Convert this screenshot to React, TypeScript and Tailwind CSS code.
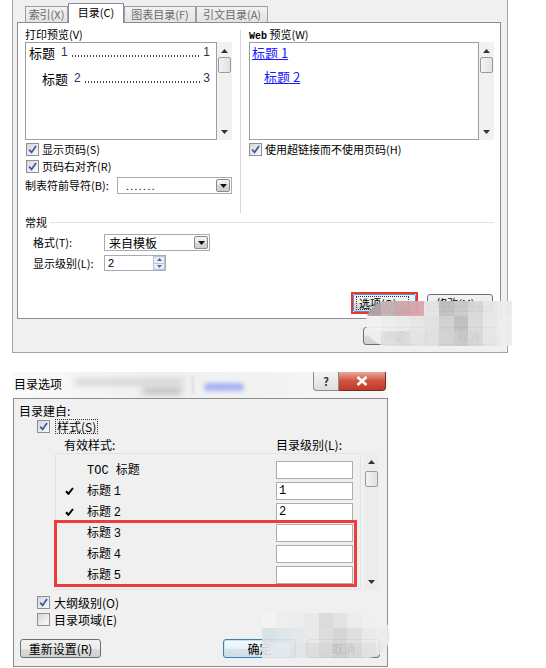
import React from "react";

const CJK = "font-['Noto_Sans_CJK_SC','Noto_Sans',sans-serif]";
const BTN =
  "flex items-center justify-center rounded-[3px] border border-[#707070] bg-[linear-gradient(#f2f2f2,#ebebeb_50%,#dddddd_50%,#cfcfcf)] text-black";

function CheckBox({ checked }: { checked?: boolean }) {
  return (
    <span className="flex h-[13px] w-[13px] shrink-0 items-center justify-center border border-[#8f8f8f] bg-[linear-gradient(135deg,#d6d6d6,#fbfbfb)]">
      {checked && (
        <svg width="9" height="9" viewBox="0 0 9 9">
          <path d="M1.2 4.6 L3.6 7.4 L8 1" stroke="#3657a8" strokeWidth="1.7" fill="none" />
        </svg>
      )}
    </span>
  );
}

function DropBtn() {
  return (
    <span className="ml-auto mr-[1px] flex h-[13px] w-[14px] items-center justify-center rounded-[2px] border border-[#8a8a8a] bg-[linear-gradient(#f6f6f6,#e4e4e4_50%,#d6d6d6_50%,#cfcfcf)]">
      <svg width="7" height="4" viewBox="0 0 7 4">
        <path d="M0 0 L7 0 L3.5 4 Z" fill="#111" />
      </svg>
    </span>
  );
}

function ScrollBar({ w, h, thumbTop, light }: { w: number; h: number; thumbTop: number; light?: boolean }) {
  return (
    <div
      className={`relative flex shrink-0 flex-col items-center ${light ? "bg-[#ececec]" : "bg-[#f1f1f1]"}`}
      style={{ width: w, height: h }}
    >
      <svg className="mt-[7px]" width="7" height="4" viewBox="0 0 7 4">
        <path d="M0 4 L7 4 L3.5 0 Z" fill="#333" />
      </svg>
      <div
        className="absolute left-[1px] right-[1px] h-[16px] rounded-[2px] border border-[#9b9b9b] bg-[linear-gradient(90deg,#f3f3f3,#e2e2e2)]"
        style={{ top: thumbTop }}
      />
      <svg className="mb-[6px] mt-auto" width="7" height="4" viewBox="0 0 7 4">
        <path d="M0 0 L7 0 L3.5 4 Z" fill="#333" />
      </svg>
    </div>
  );
}

function TocLine({ indent, n, page, mt }: { indent: number; n: string; page: string; mt: number }) {
  return (
    <div className="flex h-[18px] min-w-0 items-center whitespace-nowrap" style={{ paddingLeft: indent, marginTop: mt }}>
      <span className="shrink-0 text-[13px]">标题</span>
      <span className="ml-[6px] shrink-0 font-['Liberation_Sans',sans-serif] text-[12px] text-[#2a3350]">{n}</span>
      <span className="mx-[3px] mt-[8px] h-[2px] min-w-0 flex-1 bg-[radial-gradient(circle,#444_0.7px,transparent_0.9px)] bg-[length:3px_2px]" />
      <span className="shrink-0 font-['Liberation_Sans',sans-serif] text-[12px] text-[#2a3350]">{page}</span>
    </div>
  );
}

function Tab({ label, w }: { label: string; w: number }) {
  return (
    <div
      className="flex h-[16px] items-center justify-center border border-b-0 border-[#9a9da5] bg-[linear-gradient(#f2f2f2,#e3e3e3)] text-[11px] text-[#6a6a6a]"
      style={{ width: w }}
    >
      {label}
    </div>
  );
}

function TopDialog() {
  return (
    <div className="ml-[12px] flex h-[353px] w-[496px] flex-col border border-t-0 border-[#a3a3a3] bg-[#f0f0f0]">
      {/* tabs */}
      <div className="flex h-[22px] items-end pl-[12px] leading-none">
        <Tab label="索引(X)" w={43} />
        <div className="relative z-10 mb-[-1px] flex h-[20px] w-[56px] items-center justify-center border border-b-0 border-[#898c95] bg-white pb-[2px] text-[11px]">
          目录(C)
        </div>
        <Tab label="图表目录(F)" w={72} />
        <Tab label="引文目录(A)" w={72} />
      </div>
      {/* panel */}
      <div className="ml-[4px] flex h-[297px] w-[484px] flex-col border border-[#898c95] bg-white text-[11px]">
        <div className="flex items-start pl-[7px] pt-[5px]">
          {/* left column */}
          <div className="flex w-[207px] shrink-0 flex-col">
            <div className="h-[12px] leading-[12px]">打印预览(V)</div>
            <div className="mt-[2px] flex h-[98px] w-[207px]">
              <div className="flex min-w-0 flex-1 flex-col overflow-hidden border border-[#9a9ea6] pl-[3px] pr-[6px] leading-none">
                <TocLine indent={0} n="1" page="1" mt={0} />
                <TocLine indent={13} n="2" page="3" mt={8} />
              </div>
              <ScrollBar w={15} h={98} thumbTop={15} />
            </div>
            <div className="mt-[3px] flex h-[13px] items-center pl-[1px]">
              <CheckBox checked />
              <span className="ml-[3px] leading-none">显示页码(S)</span>
            </div>
            <div className="mt-[4px] flex h-[13px] items-center pl-[1px]">
              <CheckBox checked />
              <span className="ml-[3px] leading-none">页码右对齐(R)</span>
            </div>
            <div className="mt-[4px] flex h-[17px] items-center">
              <span className="w-[92px] leading-none">制表符前导符(B):</span>
              <div className="flex h-[17px] w-[115px] items-center border border-[#a5acb5] bg-white pl-[8px]">
                <span className="text-[10px] leading-none tracking-[1.5px]">.......</span>
                <DropBtn />
              </div>
            </div>
          </div>
          {/* separator */}
          <div className="ml-[8px] mt-[2px] h-[183px] w-px shrink-0 bg-[#d6d6d6]" />
          {/* right column */}
          <div className="ml-[8px] flex w-[245px] shrink-0 flex-col">
            <div className="h-[12px] leading-[12px]">
              <span className="font-['Liberation_Mono',monospace] text-[10px] font-bold">Web</span> 预览(W)
            </div>
            <div className="mt-[2px] flex h-[98px] w-[245px]">
              <div className="flex min-w-0 flex-1 flex-col overflow-hidden border border-[#9a9ea6] text-[13px] leading-none">
                <div className="flex h-[18px] items-center pl-[2px]">
                  <span className="text-[#1a1aff] underline">标题 1</span>
                </div>
                <div className="mt-[6px] flex h-[18px] items-center pl-[14px]">
                  <span className="text-[#1a1aff] underline">标题 2</span>
                </div>
              </div>
              <ScrollBar w={15} h={98} thumbTop={15} />
            </div>
            <div className="mt-[3px] flex h-[13px] items-center">
              <CheckBox checked />
              <span className="ml-[3px] leading-none">使用超链接而不使用页码(H)</span>
            </div>
          </div>
        </div>
        {/* general */}
        <div className="mt-[3px] flex h-[12px] items-center pl-[7px] pr-[6px]">
          <span className="leading-none">常规</span>
          <div className="ml-[3px] h-px flex-1 bg-[#dbe3ea]" />
        </div>
        <div className="mt-[6px] flex h-[17px] items-center pl-[15px]">
          <span className="w-[71px] leading-none">格式(T):</span>
          <div className="flex h-[17px] w-[106px] items-center border border-[#a5acb5] bg-white pl-[4px] text-[12px] leading-none">
            来自模板
            <DropBtn />
          </div>
        </div>
        <div className="mt-[4px] flex h-[16px] items-center pl-[15px]">
          <span className="w-[71px] leading-none">显示级别(L):</span>
          <div className="flex h-[16px] w-[62px] items-center border border-[#a5acb5] bg-white pl-[3px] text-[11px] leading-none">
            <span className="font-['Liberation_Sans',sans-serif]">2</span>
            <div className="ml-auto flex h-[14px] w-[12px] flex-col">
              <div className="flex flex-1 items-center justify-center border border-[#b7c4d6] bg-[#e6eef8]">
                <svg width="5" height="3" viewBox="0 0 5 3">
                  <path d="M0 3 L5 3 L2.5 0 Z" fill="#4e6a90" />
                </svg>
              </div>
              <div className="flex flex-1 items-center justify-center border border-t-0 border-[#b7c4d6] bg-[#e6eef8]">
                <svg width="5" height="3" viewBox="0 0 5 3">
                  <path d="M0 0 L5 0 L2.5 3 Z" fill="#4e6a90" />
                </svg>
              </div>
            </div>
          </div>
        </div>
        {/* options / modify */}
        <div className="mb-[4px] mt-auto flex items-center justify-end gap-[9px] pr-[7px]">
          <div className="flex h-[22px] w-[67px] border-2 border-[#ec3338]">
            <div className="flex flex-1 items-center justify-start rounded-[2px] border border-[#3c9fd8] bg-[linear-gradient(#f6f6f6,#ececec_50%,#dedede_50%,#d4d4d4)] pl-[2px]">
              <span className="border border-dotted border-[#333] px-[2px] text-[11px] leading-[12px]">选项(O)...</span>
            </div>
          </div>
          <div className={`${BTN} h-[18px] w-[66px] text-[11px] leading-none`}>修改(M)...</div>
        </div>
      </div>
      {/* ok / cancel */}
      <div className="mt-[8px] flex justify-end gap-[10px] pr-[7px]">
        <div className={`${BTN} h-[18px] w-[64px] text-[11px] leading-none`}>确定</div>
        <div className={`${BTN} h-[18px] w-[63px] text-[11px] leading-none`}>取消</div>
      </div>
    </div>
  );
}

const ROWS: { label: string; mark?: boolean; val?: string }[] = [
  { label: "TOC 标题" },
  { label: "标题 1", mark: true, val: "1" },
  { label: "标题 2", mark: true, val: "2" },
  { label: "标题 3" },
  { label: "标题 4" },
  { label: "标题 5" },
];

function BottomDialog() {
  return (
    <div className="ml-[12px] mt-[19px] flex w-[376px] flex-col">
      {/* title bar */}
      <div className="relative flex h-[26px] items-start overflow-hidden bg-[linear-gradient(90deg,#fafafa,#f0f0f0_40%,#f6f6f6)]">
        <div className="absolute left-[62px] top-[7px] h-[6px] w-[110px] rounded-full bg-[#d2d2d2] blur-[3px]" />
        <div className="absolute left-[130px] top-[16px] h-[6px] w-[40px] rounded-full bg-[#b9b9b9] blur-[3px]" />
        <div className="absolute left-[180px] top-[4px] h-[18px] w-[2px] bg-[#dcdcdc] blur-[1px]" />
        <div className="absolute left-[192px] top-[11px] h-[8px] w-[40px] rounded-full bg-[#a6b2f2] blur-[2px]" />
        <span className="relative ml-[2px] mt-[5px] text-[12px] leading-[13px]">目录选项</span>
        <div className="relative ml-auto mr-[2px] flex">
          <div className="flex h-[19px] w-[26px] items-center justify-center rounded-bl-[4px] border border-t-0 border-[#8c8c8c] bg-[linear-gradient(#f4f4f4,#dedede)] text-[11px] font-bold leading-none text-[#333]">
            ?
          </div>
          <div className="flex h-[19px] w-[47px] items-center justify-center rounded-br-[4px] border border-l-0 border-t-0 border-[#7a2a20] bg-[linear-gradient(#e9a99b,#d0533c_50%,#c0392b)]">
            <svg width="12" height="10" viewBox="0 0 12 10">
              <path d="M1.5 1 L10.5 9 M10.5 1 L1.5 9" stroke="#ffffff" strokeWidth="2.6" />
            </svg>
          </div>
        </div>
      </div>
      {/* body */}
      <div className="ml-[1px] flex h-[269px] w-[375px] flex-col border border-[#8d8d8d] bg-[#f0f0f0] text-[12px]">
        <div className="mt-[5px] h-[14px] pl-[5px] leading-[14px]">目录建自:</div>
        <div className="mt-[1px] flex h-[15px] items-center pl-[23px]">
          <CheckBox checked />
          <span className="ml-[5px] border border-dotted border-[#333] px-[1px] leading-[13px]">样式(S)</span>
        </div>
        <div className="mt-[4px] flex h-[14px] items-center pl-[50px] leading-none">
          <span className="w-[212px]">有效样式:</span>
          <span>目录级别(L):</span>
        </div>
        <div className="mt-[1px] flex h-[137px] pl-[41px]">
          <div className="flex w-[306px] flex-col rounded-[2px] border border-[#dfe4e9] bg-[#f0f0f0] pt-[7px]">
            {ROWS.map((r) => (
              <div key={r.label} className="mb-[3px] flex h-[18px] items-center">
                <span className="flex w-[31px] pl-[9px]">
                  {r.mark && (
                    <svg width="9" height="8" viewBox="0 0 9 8">
                      <path d="M1 4.2 L3.4 6.8 L8 1" stroke="#000" strokeWidth="2" fill="none" />
                    </svg>
                  )}
                </span>
                <span className="w-[189px] leading-none">
                  {r.label.split(" ").map((p, i) =>
                    /^[A-Z0-9]+$/.test(p) ? (
                      <span key={i} className="font-['Liberation_Mono',monospace] text-[12px]">
                        {p}
                        {i === 0 ? " " : ""}
                      </span>
                    ) : (
                      <span key={i}>
                        {p}
                        {i === 0 ? " " : ""}
                      </span>
                    )
                  )}
                </span>
                <div className="flex h-[18px] w-[77px] items-center border border-[#abadb3] bg-white pl-[2px] font-['Liberation_Mono',monospace] text-[12px] leading-none">
                  {r.val ?? ""}
                </div>
              </div>
            ))}
          </div>
          <div className="ml-[3px]">
            <ScrollBar w={15} h={137} thumbTop={18} light />
          </div>
        </div>
        <div className="mt-[6px] flex h-[13px] items-center pl-[23px]">
          <CheckBox checked />
          <span className="ml-[4px] leading-none">大纲级别(O)</span>
        </div>
        <div className="mt-[4px] flex h-[13px] items-center pl-[23px]">
          <CheckBox />
          <span className="ml-[4px] leading-none">目录项域(E)</span>
        </div>
        <div className="mt-[13px] flex h-[19px] pl-[6px]">
          <div className={`${BTN} h-[19px] w-[81px] leading-none`}>重新设置(R)</div>
          <div className="ml-[122px] flex h-[19px] w-[73px] items-center justify-center rounded-[3px] border border-[#3c7fb1] bg-[linear-gradient(#f4f9fc,#e9f1f7_50%,#d9e5ee_50%,#cdd9e3)] leading-none shadow-[inset_0_0_0_1px_#bfe3f7]">
            确定
          </div>
          <div className={`${BTN} ml-[11px] h-[19px] w-[73px] leading-none`}>取消</div>
        </div>
      </div>
    </div>
  );
}

const TOP_MOSAIC: string[][] = [
  ["#b3a2a6", "#c3b3b7", "#cda7ab", "#d7a6ab", "#e4e4e4", "#c0c0c0", "#cacaca", "#d7d7d7", "#e6e6e6", "#ececec"],
  ["#f2f2f2", "#ededed", "#eaeaea", "#e6e6e6", "#e2e2e2", "#d0d0d0", "#bfbfbf", "#dadada", "#e8e8e8", "#eeeeee"],
  ["#efefef", "#e2e2e2", "#dcdcdc", "#e4e4e4", "#e0e0e0", "#d2d2d2", "#cbcbcb", "#d9d9d9", "#e7e7e7", "#eeeeee"],
];

const BOTTOM_MOSAIC: string[][] = [
  ["#f4f4f4", "#eeeeee", "#ececec", "#e9e9e9", "#d9d9d9", "#e2e2e2", "#ececec", "#efefef", "#f0f0f0"],
  ["#d7e1e7", "#dde5ea", "#e3e8eb", "#e8e9ea", "#dcdcdc", "#d4d4d4", "#dfdfdf", "#eaeaea", "#ededed"],
  ["#e3e9ed", "#e6eaed", "#e2e4e6", "#dedede", "#d6d6d6", "#cfcfcf", "#d8d8d8", "#e2e2e2", "#e9e9e9"],
];

function Mosaic({ data, cell, className }: { data: string[][]; cell: number; className: string }) {
  return (
    <div className={`absolute flex flex-col overflow-hidden ${className}`}>
      {data.map((row, i) => (
        <div key={i} className="flex">
          {row.map((c, j) => (
            <div key={j} style={{ width: cell, height: cell, background: c }} />
          ))}
        </div>
      ))}
    </div>
  );
}

export default function App() {
  return (
    <div className={`relative h-[668px] w-[546px] overflow-hidden bg-white text-black ${CJK}`}>
      <TopDialog />
      <BottomDialog />
      <div className="absolute left-[54px] top-[520px] h-[67px] w-[303px] border-[3px] border-[#ef3b3b]" />
      <Mosaic data={TOP_MOSAIC} cell={15} className="left-[366px] top-[301px] h-[45px] w-[146px] rounded-l-[22px] opacity-95" />
      <Mosaic data={BOTTOM_MOSAIC} cell={15} className="left-[262px] top-[613px] h-[45px] w-[128px] rounded-r-[22px] opacity-90" />
    </div>
  );
}
